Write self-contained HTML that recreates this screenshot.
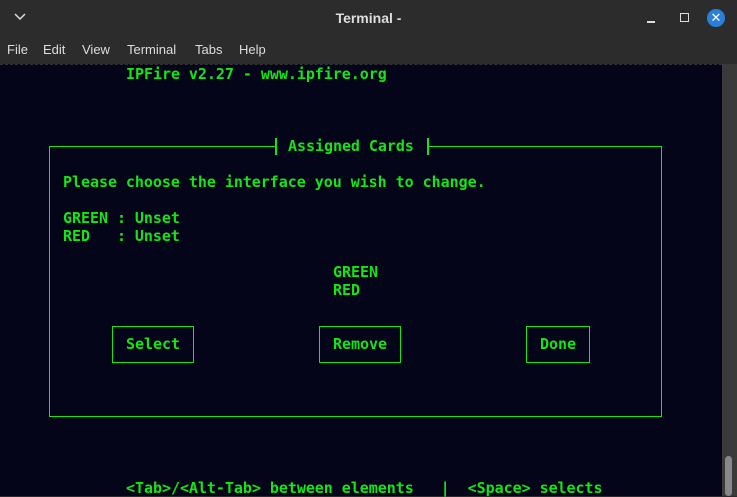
<!DOCTYPE html>
<html><head><style>
*{margin:0;padding:0;box-sizing:border-box}
body{width:737px;height:496px;overflow:hidden;background:#2c2c2c;font-family:"Liberation Sans",sans-serif;position:relative}
.title{position:absolute;top:0;left:0;width:737px;height:34px;background:#2c2c2c;color:#ddd;font-weight:bold;font-size:14px;text-align:center;line-height:36px}
.menu{position:absolute;top:34px;left:0;width:737px;height:30px;color:#ddd;font-size:13px;line-height:32px}
.menu span{position:absolute}
.term{position:absolute;top:64px;left:0;width:722px;height:432px;background:#05051a;border-top:1px dashed #333}
.sb{position:absolute;top:64px;left:722px;width:15px;height:432px;background:#3a3a3a}
.thumb{position:absolute;left:725px;top:456px;width:7px;height:40px;background:#888;border-radius:4px}
.t{position:absolute;font-family:"DejaVu Sans Mono","Liberation Mono",monospace;font-weight:bold;font-size:15px;letter-spacing:-0.04px;color:#14e614;line-height:18px;white-space:pre}
.box{position:absolute;border:1.5px solid #14e614}
.v{position:absolute;width:1.5px;background:#14e614}
</style></head><body>
<div class="title">Terminal -</div>
<svg style="position:absolute;left:14px;top:13px" width="12" height="8"><path d="M1 1L6 6L11 1" stroke="#ddd" stroke-width="1.5" fill="none"/></svg>
<div style="position:absolute;left:647px;top:21px;width:8px;height:1.5px;background:#ddd"></div>
<div style="position:absolute;left:680px;top:13px;width:9px;height:9px;border:1.5px solid #ddd"></div>
<div style="position:absolute;left:707px;top:9px;width:18px;height:18px;border-radius:50%;background:#2a7fd9;color:#fff;font-size:13px;text-align:center;line-height:18px">✕</div>
<div class="menu"><span style="left:7px">File</span><span style="left:43px">Edit</span><span style="left:82px">View</span><span style="left:127px">Terminal</span><span style="left:195px">Tabs</span><span style="left:239px">Help</span></div>
<div class="term"></div>
<div class="sb"></div><div class="thumb"></div>
<div class="t" style="left:126px;top:65px">IPFire v2.27 - www.ipfire.org</div>
<div class="box" style="left:49px;top:146px;width:613px;height:271px"></div>
<div style="position:absolute;left:276px;top:140px;width:151px;height:14px;background:#05051a"></div>
<div class="v" style="left:275px;top:138px;height:17px"></div>
<div class="v" style="left:427px;top:138px;height:17px"></div>
<div class="t" style="left:288px;top:137px">Assigned Cards</div>
<div class="t" style="left:63px;top:173px">Please choose the interface you wish to change.</div>
<div class="t" style="left:63px;top:209px">GREEN : Unset
RED   : Unset</div>
<div class="t" style="left:333px;top:263px">GREEN
RED</div>
<div class="box" style="left:112px;top:326px;width:82px;height:37px"></div>
<div class="t" style="left:126px;top:335px">Select</div>
<div class="box" style="left:319px;top:326px;width:82px;height:37px"></div>
<div class="t" style="left:333px;top:335px">Remove</div>
<div class="box" style="left:526px;top:326px;width:64px;height:37px"></div>
<div class="t" style="left:540px;top:335px">Done</div>
<div class="t" style="left:126px;top:479px">&lt;Tab&gt;/&lt;Alt-Tab&gt; between elements   |  &lt;Space&gt; selects</div>
</body></html>
